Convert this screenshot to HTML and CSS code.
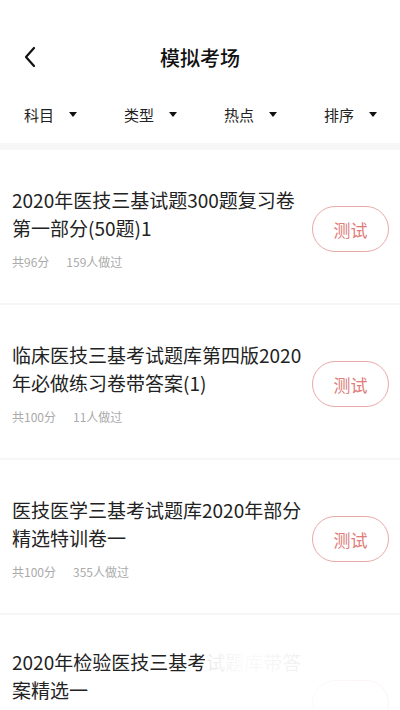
FILE: index.html
```html
<!DOCTYPE html>
<html lang="zh-CN">
<head>
  <meta charset="UTF-8">
  <title>模拟考场</title>
  <link rel="stylesheet" href="styles.css">
</head>
<body>

  <!-- Header -->
  <header class="topbar">
    <a class="back" href="#">
      <svg width="14" height="22" viewBox="0 0 14 22"><path d="M11 2 L3 11 L11 20" fill="none" stroke="#111" stroke-width="2.2" stroke-linecap="round" stroke-linejoin="round"/></svg>
    </a>
    <h1 class="title">模拟考场</h1>
  </header>

  <!-- Filters -->
  <nav class="filters">
    <div class="filter">科目<span class="caret"></span></div>
    <div class="filter">类型<span class="caret"></span></div>
    <div class="filter">热点<span class="caret"></span></div>
    <div class="filter">排序<span class="caret"></span></div>
  </nav>

  <!-- Exam list -->
  <section class="list">
    <div class="card">
      <div class="info">
        <p class="name">2020年医技三基试题300题复习卷第一部分(50题)1</p>
        <p class="meta"><span>共96分</span><span>159人做过</span></p>
      </div>
      <button class="btn">测试</button>
    </div>
    <div class="card">
      <div class="info">
        <p class="name">临床医技三基考试题库第四版2020年必做练习卷带答案(1)</p>
        <p class="meta"><span>共100分</span><span>11人做过</span></p>
      </div>
      <button class="btn">测试</button>
    </div>
    <div class="card">
      <div class="info">
        <p class="name">医技医学三基考试题库2020年部分精选特训卷一</p>
        <p class="meta"><span>共100分</span><span>355人做过</span></p>
      </div>
      <button class="btn">测试</button>
    </div>
    <div class="card last">
      <div class="info">
        <p class="name">2020年检验医技三基考试题库带答案精选一</p>
      </div>
      <button class="btn btn-ghost"></button>
      <div class="fade"></div>
    </div>
  </section>

</body>
</html>
```

FILE: styles.css
```css
body {
  margin: 0;
  background: #fff;
  font-family: "Noto Sans CJK SC", "Noto Sans", sans-serif;
  color: #222;
  overflow: hidden;
}
.topbar {
  height: 90px;
  display: flex;
  align-items: center;
  justify-content: center;
  position: relative;
}
.back {
  position: absolute;
  left: 23px;
  top: 46px;
  display: block;
  line-height: 0;
}
.title {
  margin: 0;
  margin-top: 24px;
  font-size: 20px;
  font-weight: 500;
  color: #111;
}
.filters {
  display: grid;
  grid-template-columns: repeat(4, 100px);
  height: 53px;
  align-items: center;
  border-bottom: 7px solid #f7f7f7;
}
.filter {
  display: flex;
  align-items: center;
  padding-left: 24px;
  font-size: 15px;
  color: #222;
  line-height: 20px;
  margin-top: -4px;
}
.caret {
  margin-left: 15px;
  width: 0;
  height: 0;
  border-left: 4.5px solid transparent;
  border-right: 4.5px solid transparent;
  border-top: 5px solid #111;
}
.card {
  display: flex;
  align-items: center;
  gap: 8px;
  padding: 36px 11px 33px 12px;
  border-bottom: 2px solid #f6f6f6;
  position: relative;
}
.info {
  flex: 1;
}
.name {
  margin: 0;
  font-size: 19px;
  line-height: 28px;
  color: #222;
}
.meta {
  margin: 12px 0 0;
  font-size: 12px;
  line-height: 16px;
  color: #aaa;
  display: flex;
  gap: 17px;
}
.btn {
  flex: none;
  width: 77px;
  height: 46px;
  border: 1px solid #e8a9a7;
  border-radius: 23px;
  background: #fff;
  color: #e07c7a;
  font-family: inherit;
  font-size: 17px;
  margin-top: 2px;
}
.last {
  align-items: flex-start;
  padding-top: 33px;
}
.last .btn {
  margin-top: 32px;
}
.last .fade {
  position: absolute;
  left: 205px;
  right: 0;
  top: 30px;
  bottom: 0;
  background: linear-gradient(90deg, rgba(255,255,255,0.9), rgba(255,255,255,0.98) 20%, rgba(255,255,255,0.85));
}
```
